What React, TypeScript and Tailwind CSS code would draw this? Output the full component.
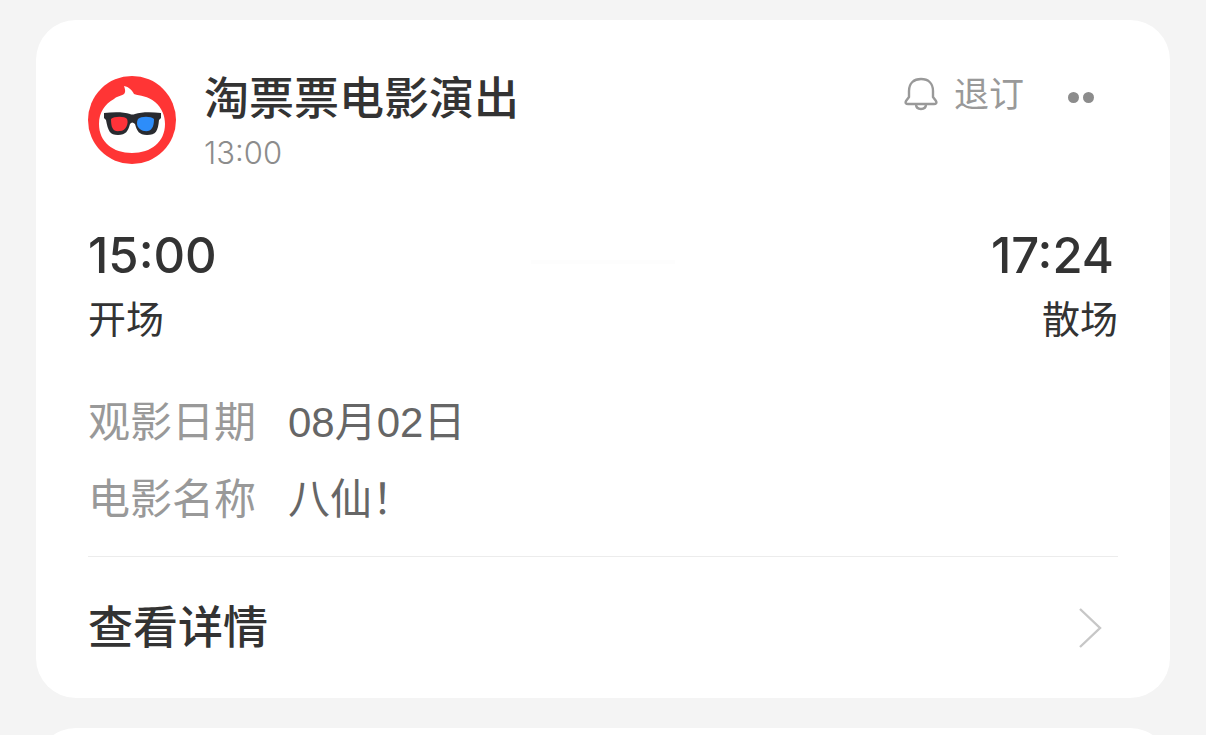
import React from 'react';

const details = [
    { label: '观影日期', value: '08月02日' },
    { label: '电影名称', value: '八仙！' },
];

const Logo = () => (
    <svg viewBox="0 0 88 88" className="w-22 h-22 shrink-0" aria-hidden="true">
        <circle cx="44" cy="44" r="44" fill="#ff3535" />
        <path
            d="M11 48C11 36 17 28 26 23C29 20 33 20 36 18C38 16 37 13 36 10C41 11 44 14 46 18C52 20 60 20 67 26C74 32 77 40 77 48C77 66 63 77 44 77C25 77 11 66 11 48Z"
            fill="#fff"
        />
        <path
            d="M16 37C26 36 36 36 42 38Q44 39 47 38C53 36 63 36 73 37V42L71 44C70 55 68 59 59 59C51 59 49 55 47 48Q44 45 42 48C40 55 38 59 30 59C22 59 20 55 18 44L16 42Z"
            fill="#292b30"
        />
        <path d="M23 43C26 40 37 40 39 43C41 47 38 55 32 55C25 56 23 52 23 43Z" fill="#ff3239" />
        <path d="M50 43C53 40 63 40 66 43C66 52 63 56 56 55C51 54 47 49 50 43Z" fill="#2d8dfa" />
    </svg>
);

const BellIcon = () => (
    <svg
        viewBox="0 0 34 34"
        className="w-[34px] h-[34px]"
        fill="none"
        stroke="#999"
        strokeWidth="2.4"
        strokeLinejoin="round"
        aria-hidden="true"
    >
        <path d="M5 14C5 6 10 2 17 2C24 2 29 6 29 14V20L32 24C33 26 32 27 30 27H4C2 27 1 26 2 24L5 20Z" />
        <path d="M12 27C12 30 14 32 17 32C20 32 22 30 22 27" />
    </svg>
);

const Moment: React.FC<{ time: string; label: string }> = ({ time, label }) => (
    <div>
        <p className="pr-1 text-[49px] leading-14 font-medium">{time}</p>
        <p className="mt-3 text-[38px] leading-[46px]">{label}</p>
    </div>
);

const App = () => {
    return (
        <main className="h-screen overflow-hidden bg-[#f4f4f4] px-9 pt-5 font-['Inter','Noto_Sans_CJK_SC',sans-serif] text-[#333]">
            <article lang="zh-CN" className="rounded-[40px] bg-white px-13 pt-13">
                <header className="flex items-start">
                    <div className="mt-1">
                        <Logo />
                    </div>
                    <div className="ml-7 flex-1">
                        <h1 className="text-[45px] leading-[54px] font-medium">淘票票电影演出</h1>
                        <p className="mt-2 text-[31px] leading-[38px] font-light text-[#8c8c8c]">13:00</p>
                    </div>
                    <button type="button" className="flex items-center gap-4 text-[35px] leading-11 text-[#999]">
                        <BellIcon />
                        退订
                    </button>
                    <button type="button" aria-label="更多" className="ml-11 mr-6 flex h-[50px] items-center gap-1">
                        <span className="size-[11px] rounded-full bg-[#8c8c8c]" />
                        <span className="size-[11px] rounded-full bg-[#8c8c8c]" />
                    </button>
                </header>

                <section className="mt-14 grid grid-cols-3">
                    <Moment time="15:00" label="开场" />
                    <div className="mt-8 h-1 w-36 justify-self-center bg-[#fdfdfd]" />
                    <div className="text-right">
                        <Moment time="17:24" label="散场" />
                    </div>
                </section>

                <dl className="mt-[42px] mb-[18px] font-['Liberation_Sans','Noto_Sans_CJK_SC',sans-serif] text-[42px] leading-[77px]">
                    {details.map((item) => (
                        <div key={item.label} className="flex gap-8">
                            <dt className="text-[#999]">{item.label}</dt>
                            <dd className="text-[#666]">{item.value}</dd>
                        </div>
                    ))}
                </dl>

                <a href="#detail" className="flex h-[142px] items-center justify-between border-t border-[#ececec] pr-4">
                    <span className="text-[45px] leading-[52px] font-medium">查看详情</span>
                    <svg viewBox="0 0 24 40" className="w-6 h-10" fill="none" stroke="#c7c7c7" strokeWidth="2.4" aria-hidden="true">
                        <path d="M2 1L22 20L2 39" />
                    </svg>
                </a>
            </article>

            {/* Next message */}
            <article className="mt-[30px] h-40 rounded-[40px] bg-white" />
        </main>
    );
};

export default App;
